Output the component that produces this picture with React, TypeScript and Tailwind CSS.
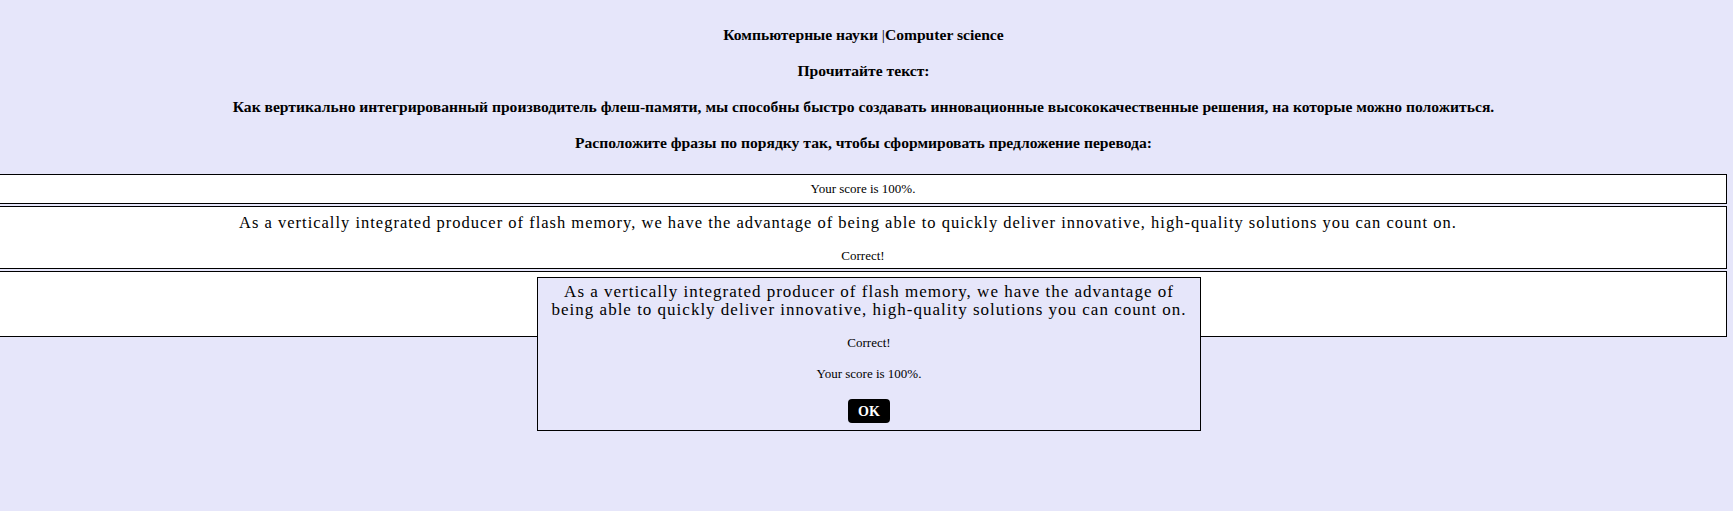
import React from "react";

const sentence =
  "As a vertically integrated producer of flash memory, we have the advantage of being able to quickly deliver innovative, high-quality solutions you can count on.";

const App = () => {
  return (
    <div
      className="relative min-h-[511px] bg-[#e6e6fa] text-black pt-[25px] pr-[6px]"
      style={{ fontFamily: '"Liberation Serif", "Times New Roman", serif' }}
    >
      {/* header */}
      <div className="flex flex-col items-center gap-[16px] text-[15.6px] leading-[20px] font-bold text-center">
        <p>
          Компьютерные науки <span className="font-normal">|</span>Computer science
        </p>
        <p>Прочитайте текст:</p>
        <p>
          Как вертикально интегрированный производитель флеш-памяти, мы способны быстро создавать инновационные
          высококачественные решения, на которые можно положиться.
        </p>
        <p>Расположите фразы по порядку так, чтобы сформировать предложение перевода:</p>
      </div>

      {/* result rows */}
      <div className="mt-[21px] flex flex-col gap-[2px]">
        <div className="-ml-[1px] bg-white border border-black py-[6px] text-center text-[13px] leading-[16px]">
          Your score is 100%.
        </div>
        <div className="-ml-[1px] bg-white border border-black pt-[6px] pb-[4px] text-center">
          <div className="pr-[30px] text-[16.5px] leading-[20px] tracking-[1px]">{sentence}</div>
          <div className="mt-[15px] text-[13px] leading-[16px]">Correct!</div>
        </div>
        <div className="-ml-[1px] bg-white border border-black h-[66px]"></div>
      </div>

      {/* popup */}
      <div className="absolute left-[537px] top-[277px] w-[664px] h-[154px] border border-black bg-[#e6e6fa] px-[8px] pt-[5px] text-center">
        <div className="text-[17px] leading-[18px] tracking-[1px]">{sentence}</div>
        <div className="mt-[16px] text-[13px] leading-[16px]">Correct!</div>
        <div className="mt-[15px] text-[13px] leading-[16px]">Your score is 100%.</div>
        <div className="mt-[17px] flex justify-center">
          <button className="w-[42px] h-[24px] rounded-[4px] bg-black text-white text-[14px] font-bold">OK</button>
        </div>
      </div>
    </div>
  );
};

export default App;
